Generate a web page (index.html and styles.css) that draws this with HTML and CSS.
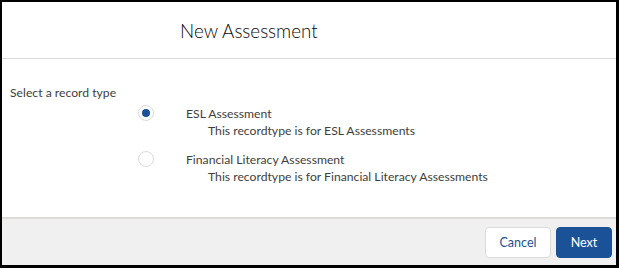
FILE: index.html
```html
<!DOCTYPE html>
<html lang="en">

<head>
    <meta charset="UTF-8">
    <title>New Assessment</title>
    <link rel="stylesheet" href="styles.css">
</head>

<body>
    <div class="modal">
        <header class="modal-header">
            <h2 class="modal-title">New Assessment</h2>
        </header>

        <div class="modal-body">
            <div class="field-label">Select a record type</div>
            <div class="options">
                <label class="option">
                    <span class="radio checked"></span>
                    <span class="option-text">
                        <span class="option-name">ESL Assessment</span>
                        <span class="option-desc">This recordtype is for ESL Assessments</span>
                    </span>
                </label>
                <label class="option">
                    <span class="radio"></span>
                    <span class="option-text">
                        <span class="option-name">Financial Literacy Assessment</span>
                        <span class="option-desc">This recordtype is for Financial Literacy Assessments</span>
                    </span>
                </label>
            </div>
        </div>

        <footer class="modal-footer">
            <button class="btn btn-neutral">Cancel</button>
            <button class="btn btn-brand">Next</button>
        </footer>
    </div>
</body>

</html>
```

FILE: styles.css
```css
html,
body {
    margin: 0;
    padding: 0;
    height: 100%;
    background-color: #000;
}

body {
    font-family: 'Lato', 'Liberation Sans', sans-serif;
    font-size: 12.2px;
    color: #3e3e3c;
    padding: 2px 3px 3px 2px;
    box-sizing: border-box;
}

.modal {
    background-color: #fff;
    height: 100%;
    display: flex;
    flex-direction: column;
}

/* header */
.modal-header {
    height: 56px;
    border-bottom: 1px solid #dddbda;
    display: flex;
    align-items: center;
    padding-left: 178px;
}

.modal-title {
    margin: 0;
    font-size: 18.8px;
    font-weight: 300;
    color: #080707;
}

/* body */
.modal-body {
    flex: 1;
    padding: 26px 8px 0;
}

.field-label {
    margin-bottom: 5px;
}

.options {
    padding-left: 128px;
}

.option {
    display: flex;
    align-items: flex-start;
    margin-bottom: 12px;
}

.radio {
    width: 14px;
    height: 14px;
    border: 1px solid #dddbda;
    border-radius: 50%;
    margin-right: 32px;
    display: flex;
    align-items: center;
    justify-content: center;
    flex-shrink: 0;
}

.radio.checked::after {
    content: "";
    width: 8px;
    height: 8px;
    border-radius: 50%;
    background-color: #1b5297;
}

.option-text {
    display: flex;
    flex-direction: column;
    line-height: 17px;
}

.option-desc {
    padding-left: 22px;
}

/* footer */
.modal-footer {
    height: 46px;
    background-color: #f0f0f0;
    border-top: 2px solid #dddbda;
    display: flex;
    justify-content: flex-end;
    align-items: center;
    padding-right: 4px;
    gap: 5px;
}

.btn {
    height: 31px;
    padding: 0;
    border-radius: 4px;
    font-family: inherit;
    font-size: 12.5px;
}

.btn-neutral {
    width: 66px;
    background-color: #fff;
    border: 1px solid #dddbda;
    color: #1b5297;
}

.btn-brand {
    width: 56px;
    background-color: #1b5297;
    border: 1px solid #1b5297;
    color: #fff;
}
```
